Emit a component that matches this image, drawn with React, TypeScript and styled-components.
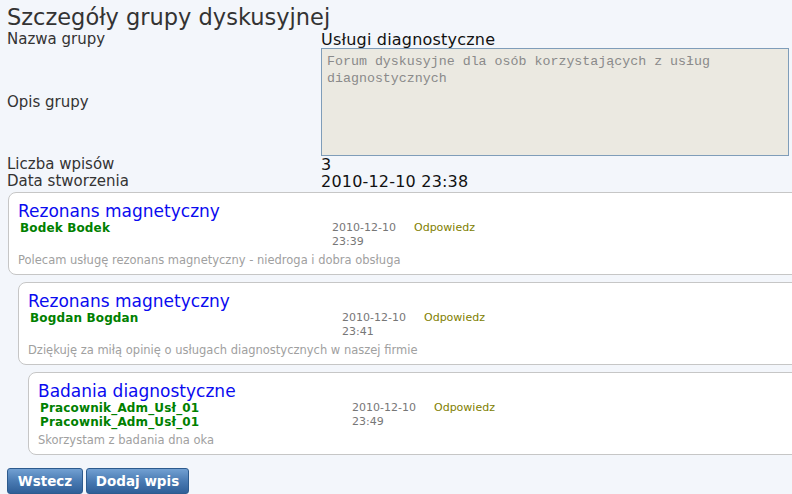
import React from "react";
import styled, { createGlobalStyle } from "styled-components";

const Global = createGlobalStyle`
  html, body { margin: 0; padding: 0; background: #f3f6fb; overflow: hidden; }
  body { font-family: "DejaVu Sans", Verdana, sans-serif; }
`;

const Page = styled.div`
  padding: 3px 0 0 7px;
  width: 792px;
  box-sizing: border-box;
`;

const Title = styled.h1`
  margin: 0;
  font-size: 22.5px;
  line-height: 28px;
  font-weight: normal;
  color: #333;
`;

const Details = styled.div`
  display: grid;
  grid-template-columns: 314px 1fr;
  align-items: center;
`;

const Label = styled.div`
  font-size: 15px;
  line-height: 17px;
  color: #333;
`;

const Value = styled.div`
  font-size: 16px;
  line-height: 17px;
  letter-spacing: 0.2px;
  color: #111;
`;

const DescBox = styled.div`
  width: 468px;
  height: 108px;
  box-sizing: border-box;
  background: #ebe9e1;
  border: 1px solid #7f9db9;
  padding: 4px 5px;
  font-family: "Liberation Mono", "Courier New", monospace;
  font-size: 13.3px;
  line-height: 17px;
  color: #8a8a8a;
`;

const Posts = styled.div`
  display: flex;
  flex-direction: column;
  gap: 7px;
  margin-top: 2px;
`;

const Card = styled.div<{ $level: number }>`
  margin-left: ${(p) => 1 + p.$level * 10}px;
  margin-right: -60px;
  background: #fff;
  border: 1px solid #c6c6c6;
  border-radius: 8px;
  padding: 8px 10px 8px 9px;
  height: 83px;
  box-sizing: border-box;
`;

const PostTitle = styled.div`
  font-size: 17px;
  line-height: 20px;
  color: #0a0af0;
`;

const Meta = styled.div`
  display: grid;
  grid-template-columns: 312px 82px auto;
  padding-left: 2px;
  font-size: 11px;
  line-height: 14px;
`;

const Authors = styled.div`
  font-weight: bold;
  font-size: 12px;
  letter-spacing: 0.15px;
  color: #008000;
`;

const DateCell = styled.div`
  color: #777;
`;

const Reply = styled.div`
  color: #808000;
`;

const Body = styled.div`
  margin-top: 4px;
  font-size: 11.5px;
  line-height: 14px;
  color: #a0a0a0;
`;

const Buttons = styled.div`
  display: flex;
  gap: 3px;
  margin-top: 13px;
`;

const Button = styled.button<{ $w: number }>`
  width: ${(p) => p.$w}px;
  height: 26px;
  border: 1px solid #2d5b8e;
  border-radius: 3px;
  background: linear-gradient(#72a0d2, #4a7bb3 50%, #2f5f98);
  color: #fff;
  font-family: "DejaVu Sans", Verdana, sans-serif;
  font-weight: bold;
  font-size: 13.5px;
  padding: 0;
  cursor: pointer;
`;

type Post = {
  level: number;
  title: string;
  authors: string[];
  date: string;
  time: string;
  body: string;
};

const posts: Post[] = [
  {
    level: 0,
    title: "Rezonans magnetyczny",
    authors: ["Bodek Bodek"],
    date: "2010-12-10",
    time: "23:39",
    body: "Polecam usługę rezonans magnetyczny - niedroga i dobra obsługa",
  },
  {
    level: 1,
    title: "Rezonans magnetyczny",
    authors: ["Bogdan Bogdan"],
    date: "2010-12-10",
    time: "23:41",
    body: "Dziękuję za miłą opinię o usługach diagnostycznych w naszej firmie",
  },
  {
    level: 2,
    title: "Badania diagnostyczne",
    authors: ["Pracownik_Adm_Usł_01", "Pracownik_Adm_Usł_01"],
    date: "2010-12-10",
    time: "23:49",
    body: "Skorzystam z badania dna oka",
  },
];

export default function App() {
  return (
    <Page>
      <Global />
      <Title>Szczegóły grupy dyskusyjnej</Title>
      <Details>
        <Label>Nazwa grupy</Label>
        <Value>Usługi diagnostyczne</Value>
        <Label>Opis grupy</Label>
        <DescBox>
          Forum dyskusyjne dla osób korzystających z usług diagnostycznych
        </DescBox>
        <Label>Liczba wpisów</Label>
        <Value>3</Value>
        <Label>Data stworzenia</Label>
        <Value>2010-12-10 23:38</Value>
      </Details>
      <Posts>
        {posts.map((p, i) => (
          <Card key={i} $level={p.level}>
            <PostTitle>{p.title}</PostTitle>
            <Meta>
              <Authors>
                {p.authors.map((a, j) => (
                  <div key={j}>{a}</div>
                ))}
              </Authors>
              <DateCell>
                {p.date}
                <br />
                {p.time}
              </DateCell>
              <Reply>Odpowiedz</Reply>
            </Meta>
            <Body>{p.body}</Body>
          </Card>
        ))}
      </Posts>
      <Buttons>
        <Button $w={76}>Wstecz</Button>
        <Button $w={103}>Dodaj wpis</Button>
      </Buttons>
    </Page>
  );
}
